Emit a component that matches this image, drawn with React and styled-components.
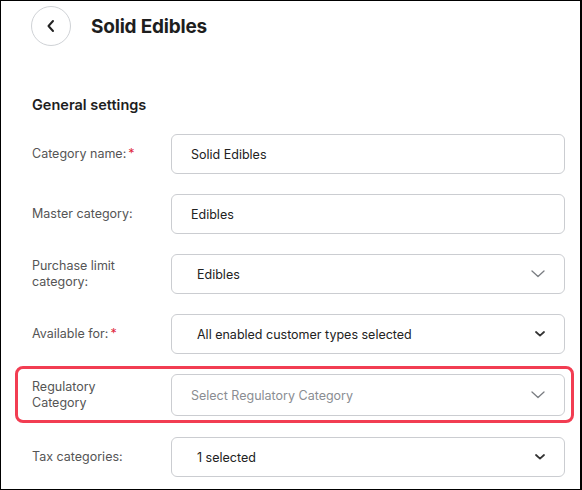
import React from "react"
import styled, { createGlobalStyle } from "styled-components"

const GlobalStyle = createGlobalStyle`
  html, body {
    margin: 0;
    padding: 0;
    background: #fff;
  }
  body {
    font-family: Inter, "Noto Sans", "Liberation Sans", sans-serif;
    color: #222;
  }
`;

const Page = styled.div`
  box-sizing: border-box;
  width: 582px;
  height: 490px;
  border: 1px solid #000;
  border-right-width: 2px;
  overflow: hidden;
  padding: 5px 15px 0 31px;
`;

const Header = styled.div`
  display: flex;
  align-items: center;
  gap: 20px;
  margin-left: -1px;
`;

const BackButton = styled.button`
  box-sizing: border-box;
  width: 40px;
  height: 40px;
  border-radius: 50%;
  border: 1px solid #cfd2d6;
  background: #fff;
  display: flex;
  align-items: center;
  justify-content: center;
  padding: 0;
  color: #222;
`;

const Title = styled.h1`
  margin: 0;
  font-size: 19px;
  font-weight: 700;
  letter-spacing: -0.2px;
  color: #1e1e1e;
`;

const SectionTitle = styled.h2`
  margin: 49px 0 19px 0;
  font-size: 14.5px;
  line-height: 20px;
  font-weight: 600;
  color: #1e1e1e;
`;

const Form = styled.div`
  display: flex;
  flex-direction: column;
  gap: 20px;
`;

const Row = styled.div`
  display: flex;
  align-items: center;
`;

const Label = styled.label`
  width: 139px;
  flex-shrink: 0;
  font-size: 12.5px;
  line-height: 16px;
  color: #555;
  padding-right: 10px;
  box-sizing: border-box;
`;

const Required = styled.span`
  color: #e0283c;
  margin-left: 2px;
`;

const Field = styled.div`
  flex: 1;
  box-sizing: border-box;
  height: ${({ tall }) => (tall ? 42 : 40)}px;
  border: 1px solid #cbcdd1;
  border-radius: 6px;
  display: flex;
  align-items: center;
  justify-content: space-between;
  padding: 0 19px 0 ${({ indent }) => indent}px;
  font-size: 12.5px;
  color: ${({ placeholder }) => (placeholder ? "#8a8d92" : "#222")};
`;

const Highlight = styled.div`
  margin: -8px -9px -6px -17px;
  padding: 5px 6px 4px 14px;
  border: 3px solid #f23d52;
  border-radius: 8px;
`;

const Chevron = ({ dark }) =>
  dark ? (
    <svg width="10" height="6" viewBox="0 0 10 6" fill="none">
      <polyline points="1,1 5,4.6 9,1" stroke="#333" strokeWidth="1.8" strokeLinecap="round" strokeLinejoin="round" />
    </svg>
  ) : (
    <svg width="14" height="8" viewBox="0 0 14 8" fill="none">
      <polyline points="1,1 7,6.5 13,1" stroke="#7a7d82" strokeWidth="1.3" strokeLinecap="round" strokeLinejoin="round" />
    </svg>
  );

const FormRow = ({ label, required, value, select, dark, indent = 19, placeholder, tall }) => (
  <Row>
    <Label>
      {label}
      {required && <Required>*</Required>}
    </Label>
    <Field indent={indent} placeholder={placeholder} tall={tall}>
      <span>{value}</span>
      {select && <Chevron dark={dark} />}
    </Field>
  </Row>
);

const App = () => {
  return (
    <>
      <GlobalStyle />
      <Page>
        <Header>
          <BackButton aria-label="Back">
            <svg width="10" height="14" viewBox="0 0 10 14" fill="none">
              <polyline points="7,2 2.5,7 7,12" stroke="#222" strokeWidth="2" strokeLinecap="round" strokeLinejoin="round" />
            </svg>
          </BackButton>
          <Title>Solid Edibles</Title>
        </Header>

        <SectionTitle>General settings</SectionTitle>

        <Form>
          <FormRow label="Category name:" required value="Solid Edibles" />
          <FormRow label="Master category:" value="Edibles" />
          <FormRow label={<>Purchase limit<br />category:</>} value="Edibles" select indent={25} />
          <FormRow label="Available for:" required value="All enabled customer types selected" select dark indent={25} />
          <Highlight>
            <FormRow label={<>Regulatory<br />Category</>} value="Select Regulatory Category" select placeholder tall />
          </Highlight>
          <FormRow label="Tax categories:" value="1 selected" select dark indent={25} />
        </Form>
      </Page>
    </>
  );
};

export default App
